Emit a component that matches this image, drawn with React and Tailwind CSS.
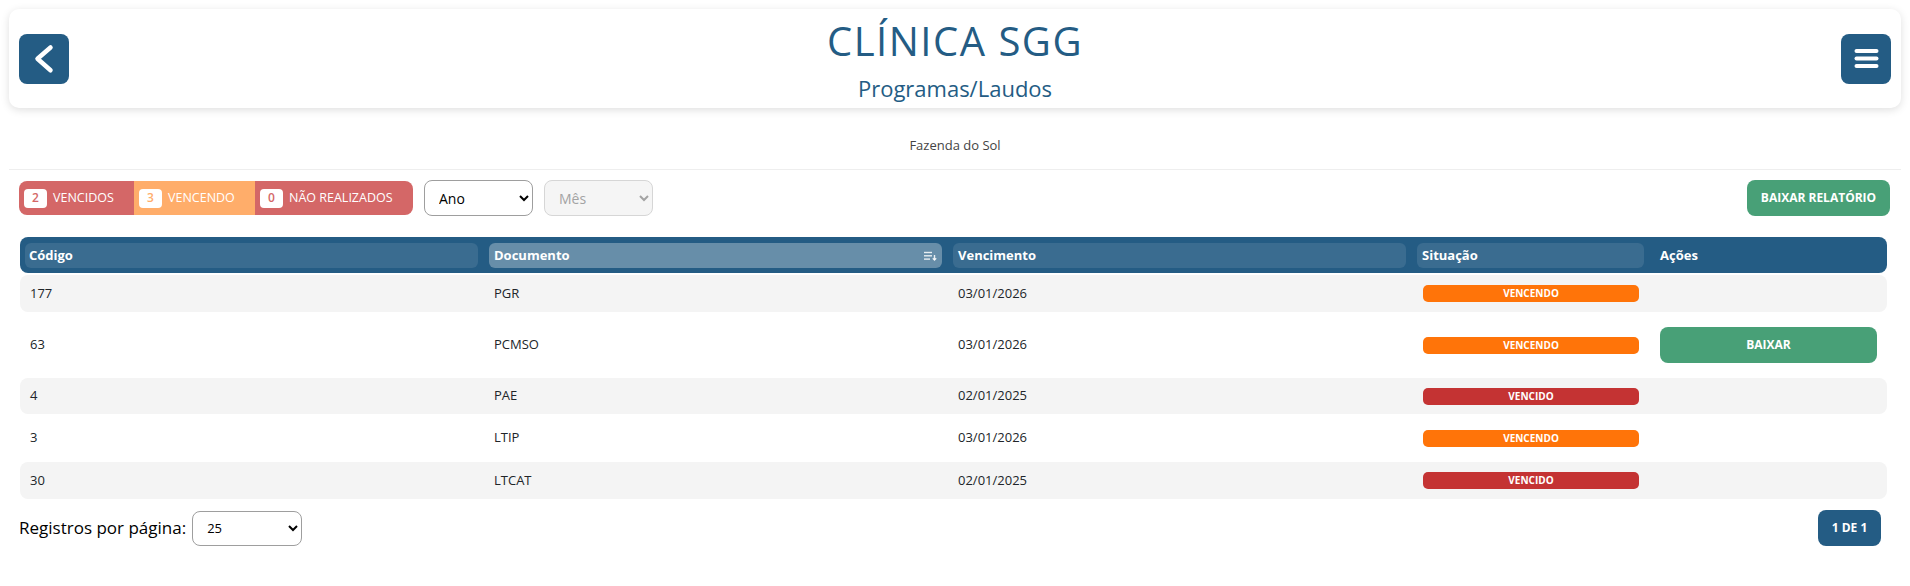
import React from "react";

const rows = [
  { code: "177", doc: "PGR", due: "03/01/2026", status: "VENCENDO", h: "h-[37px]", striped: true },
  { code: "63", doc: "PCMSO", due: "03/01/2026", status: "VENCENDO", h: "h-[66px]", striped: false, action: true },
  { code: "4", doc: "PAE", due: "02/01/2025", status: "VENCIDO", h: "h-[36px]", striped: true },
  { code: "3", doc: "LTIP", due: "03/01/2026", status: "VENCENDO", h: "h-[48px]", striped: false },
  { code: "30", doc: "LTCAT", due: "02/01/2025", status: "VENCIDO", h: "h-[37px]", striped: true },
];

const cols = "grid grid-cols-[453px_453px_453px_227px_1fr] gap-x-[11px] px-[5px]";

function StatusBadge({ status }) {
  const color = status === "VENCIDO" ? "bg-[#c43333]" : "bg-[#ff7409]";
  return (
    <div className={`flex h-[17px] w-[216px] items-center justify-center rounded-[5px] text-[10px] font-bold text-white ${color}`}>
      {status}
    </div>
  );
}

function Tag({ n, label, bg, fg, w }) {
  return (
    <div className={`flex h-full items-center gap-[6px] pl-[5px] ${bg} ${w}`}>
      <span className={`flex h-[19px] w-[23px] items-center justify-center rounded-[4px] bg-white text-[12px] font-semibold ${fg}`}>
        {n}
      </span>
      <span className="text-[12.5px] text-white">{label}</span>
    </div>
  );
}

export default function App() {
  return (
    <div className="min-h-screen bg-white font-['Open_Sans',sans-serif] text-[#212529]">
      <div className="px-[9px] pt-[9px]">
        <div className="flex h-[99px] items-center justify-between rounded-[10px] bg-white px-[10px] shadow-[0_2px_8px_rgba(0,0,0,0.13)]">
          <button className="flex h-[50px] w-[50px] items-center justify-center rounded-[8px] bg-[#245c84]">
            <svg width="50" height="50" viewBox="0 0 50 50" fill="none">
              <polyline points="31.5,13.5 18.5,24.8 31.5,36.3" stroke="white" strokeWidth="4.5" strokeLinecap="round" strokeLinejoin="round" />
            </svg>
          </button>
          <div className="flex flex-1 flex-col items-center self-start pt-[12px] text-[#245c84]">
            <h1 className="text-[40px] leading-[40px] font-medium tracking-[1.5px]">CLÍNICA SGG</h1>
            <p className="mt-[16px] text-[22px] leading-[22px]">Programas/Laudos</p>
          </div>
          <button className="flex h-[50px] w-[50px] items-center justify-center rounded-[8px] bg-[#245c84]">
            <svg width="50" height="50" viewBox="0 0 50 50" fill="none">
              <g stroke="white" strokeWidth="4" strokeLinecap="round">
                <line x1="15.5" y1="17" x2="35.5" y2="17" />
                <line x1="15.5" y1="24.5" x2="35.5" y2="24.5" />
                <line x1="15.5" y1="32" x2="35.5" y2="32" />
              </g>
            </svg>
          </button>
        </div>
      </div>

      <p className="mt-[28px] text-center text-[13px] leading-[18px] text-[#444]">Fazenda do Sol</p>
      <div className="mx-[9px] mt-[15px] border-t border-[#eeeeee]" />

      <div className="px-[19px] pt-[10px]">
        <div className="flex h-[36px] items-center justify-between pr-[1px]">
          <div className="flex items-center gap-[11px]">
            <div className="flex h-[34px] overflow-hidden rounded-[8px]">
              <Tag n="2" label="VENCIDOS" bg="bg-[#d46767]" fg="text-[#d46767]" w="w-[115px]" />
              <Tag n="3" label="VENCENDO" bg="bg-[#ffad6a]" fg="text-[#ffad6a]" w="w-[121px]" />
              <Tag n="0" label="NÃO REALIZADOS" bg="bg-[#d46767]" fg="text-[#d46767]" w="w-[158px]" />
            </div>
            <select className="h-[36px] w-[109px] rounded-[8px] border border-[#9e9e9e] bg-white pl-[10px] pr-[6px] text-[14px] text-black">
              <option>Ano</option>
            </select>
            <select disabled className="h-[36px] w-[109px] rounded-[8px] border border-[#d6d6d6] bg-[#f5f5f5] pl-[10px] pr-[6px] text-[14px] text-[#a3a3a3]">
              <option>Mês</option>
            </select>
          </div>
          <button className="h-[36px] w-[143px] rounded-[8px] bg-[#48a077] text-[12px] font-bold text-white">
            BAIXAR RELATÓRIO
          </button>
        </div>

        <div className="mt-[21px] ml-[1px] mr-[4px]">
          <div className={`${cols} h-[36px] items-center rounded-[8px] bg-[#245c84] pt-[6px] pb-[5px] text-[13px] font-bold text-white`}>
            <div className="flex h-[25px] items-center rounded-[6px] bg-[#3a6c90] px-[4px]">Código</div>
            <div className="flex h-[25px] items-center justify-between rounded-[6px] bg-[#678ea9] pl-[5px] pr-[5px]">
              <span>Documento</span>
              <svg width="14" height="10" viewBox="0 0 14 10" fill="none" stroke="rgba(255,255,255,0.85)" strokeWidth="1.4">
                <line x1="1" y1="1.5" x2="9" y2="1.5" />
                <line x1="1" y1="4.8" x2="9" y2="4.8" />
                <line x1="1" y1="8.1" x2="7" y2="8.1" />
                <line x1="11.5" y1="4" x2="11.5" y2="9" />
                <polyline points="9.8,7.3 11.5,9 13.2,7.3" />
              </svg>
            </div>
            <div className="flex h-[25px] items-center rounded-[6px] bg-[#3a6c90] px-[5px]">Vencimento</div>
            <div className="flex h-[25px] items-center rounded-[6px] bg-[#3a6c90] px-[5px]">Situação</div>
            <div className="flex h-[25px] items-center px-[5px]">Ações</div>
          </div>

          <div className="mt-[2px]">
            {rows.map((r) => (
              <div
                key={r.code}
                className={`${cols} ${r.h} items-center rounded-[8px] text-[13px] ${r.striped ? "bg-[#f4f4f4]" : "bg-white"}`}
              >
                <div className="px-[5px]">{r.code}</div>
                <div className="px-[5px]">{r.doc}</div>
                <div className="px-[5px]">{r.due}</div>
                <div className="px-[6px]">
                  <StatusBadge status={r.status} />
                </div>
                <div className="px-[5px]">
                  {r.action && (
                    <button className="h-[36px] w-[217px] rounded-[8px] bg-[#48a077] text-[12px] font-bold text-white">
                      BAIXAR
                    </button>
                  )}
                </div>
              </div>
            ))}
          </div>
        </div>

        <div className="mt-[11px] flex h-[36px] items-center justify-between pr-[10px]">
          <div className="flex items-center gap-[6px]">
            <span className="text-[17px] text-black">Registros por página:</span>
            <select className="h-[35px] w-[110px] rounded-[8px] border border-[#9e9e9e] bg-white pl-[10px] pr-[6px] text-[13px] text-black">
              <option>25</option>
            </select>
          </div>
          <button className="h-[36px] w-[63px] rounded-[8px] bg-[#245c84] text-[12px] font-bold text-white">1 DE 1</button>
        </div>
      </div>
    </div>
  );
}
